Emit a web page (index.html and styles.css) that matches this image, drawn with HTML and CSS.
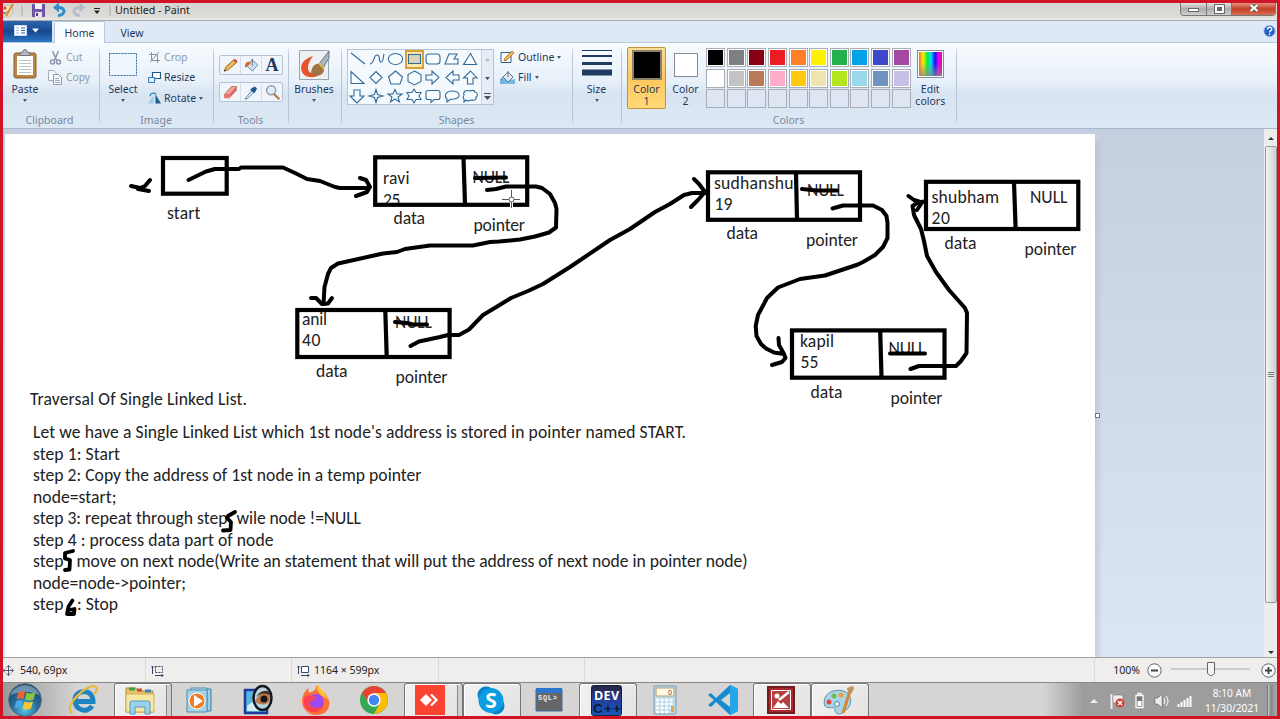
FILE: index.html
```html
<!DOCTYPE html>
<html lang="en">
<head>
<meta charset="utf-8">
<title>Untitled - Paint</title>
<link rel="stylesheet" href="styles.css">
</head>
<body>
<div class="screen">
  <header class="titlebar">
    <svg class="quick" width="112" height="18" viewBox="3 3 112 18">
      <path d="M3 5h7l3 3-1 6-4 3H3z" fill="#f4e4c4" stroke="#a5abb0" stroke-width=".6"/>
      <circle cx="5" cy="8" r="1.500" fill="#d04b35"/><circle cx="8" cy="12" r="1.500" fill="#6abb5b"/><circle cx="4.500" cy="13" r="1.300" fill="#3a8bc9"/>
      <path d="M6 16L13 4" stroke="#e28b2c" stroke-width="2.200"/>
      <path d="M22 5v11M110 5v11" stroke="#aaa"/>
      <path d="M32.500 4.500h12v12h-12z" fill="#7256a8" stroke="#67509a"/><path d="M35 4h7v5h-7z" fill="#f5f3fb"/><path d="M35 12h7v5h-7z" fill="#e6e2f2"/><path d="M36 13h2v3h-2z" fill="#553b8a"/>
      <path d="M58 15.500c8 0 8-8.500 0-8" fill="none" stroke="#318dca" stroke-width="3"/><path d="M53 7.500l6-5v10z" fill="#318dca"/>
      <path d="M80 15.500c-8 0-8-8.500 0-8" fill="none" stroke="#b1bdca" stroke-width="3"/><path d="M85.500 7.500l-6-5v10z" fill="#b1bdca"/>
      <path d="M94 8.500h6" stroke="#222"/><path d="M94 10.500h6l-3 3.500z" fill="#222"/>
    </svg>
    <span class="window-title">Untitled - Paint</span>
    <div class="window-buttons">
      <span class="wb min"><i></i></span><span class="wb max"><i></i></span><span class="wb close"><svg width="10" height="8" viewBox="0 0 10 8"><path d="M1.500 1l7 6M8.500 1l-7 6" stroke="#555" stroke-width="3.400"/><path d="M1.500 1l7 6M8.500 1l-7 6" stroke="#fff" stroke-width="2.200"/></svg></span>
    </div>
  </header>

  <nav class="tabs">
    <div class="file-tab"><svg width="30" height="14" viewBox="0 0 30 14"><path d="M.500 1.500h12v10H.500z" fill="#fff" stroke="#c8dcf6"/><path d="M2 4h3M2 6.500h3M2 9h3" stroke="#9bb8e4"/><path d="M7 4h4M7 6.500h4M7 9h4" stroke="#225fb5"/><path d="M18 4.500h7l-3.500 4z" fill="#fff"/></svg></div>
    <div class="tab active">Home</div>
    <div class="tab view">View</div>
    <svg class="help" width="13" height="14" viewBox="0 0 13 14"><circle cx="6.500" cy="7" r="5.700" fill="#2460c5" stroke="#a9c3ec"/><path d="M4.500 5.500c0-3 4.500-3 4.300-.3C8.700 6.700 6.600 6.500 6.600 8.400M6.600 9.400v1.500" fill="none" stroke="#fff" stroke-width="1.400"/></svg>
  </nav>

  <section class="ribbon">
    <div class="group clipboard">
      <div class="tools-row">
        <div class="big paste">
          <svg width="26" height="34" viewBox="0 0 26 34"><rect x="2" y="5" width="22" height="25" rx="2" fill="#b98645" stroke="#8b602c"/><path d="M5 8h16v19H5z" fill="#fff"/><path d="M7 12.500h12M7 15.500h12M7 18.500h12M7 21.500h12M7 24.500h12" stroke="#bcc3cb"/><path d="M8 4.500h2.500c0-4 5-4 5 0H18v3H8z" fill="#b3b8be" stroke="#70767c"/></svg>
          <span>Paste</span><b class="caret"></b>
        </div>
        <div class="list off">
          <div class="item"><svg width="14" height="15" viewBox="0 0 14 15"><path d="M4 1l4 9M10 1L6 10" stroke="#8b97a8" stroke-width="1.500"/><circle cx="4" cy="12" r="2" fill="none" stroke="#8b97a8" stroke-width="1.500"/><circle cx="10" cy="12" r="2" fill="none" stroke="#8b97a8" stroke-width="1.500"/></svg><span>Cut</span></div>
          <div class="item"><svg width="15" height="15" viewBox="0 0 15 15"><path d="M.500.500h5l3 3v7h-8z" fill="#f5f8fc" stroke="#a4b0c0"/><path d="M5.500 4.500h5l3 3v7h-8z" fill="#f5f8fc" stroke="#8f9db0"/><path d="M7 8.500h4M7 10.500h5M7 12.500h5" stroke="#a4b0c0"/></svg><span>Copy</span></div>
        </div>
      </div>
      <div class="label">Clipboard</div>
    </div>

    <div class="group image">
      <div class="tools-row">
        <div class="big select">
          <svg width="30" height="34" viewBox="0 0 30 34"><rect x="1.500" y="5.500" width="27" height="22" fill="#eef6fd" stroke="#2d6c9e" stroke-dasharray="2 1"/></svg>
          <span>Select</span><b class="caret"></b>
        </div>
        <div class="list">
          <div class="item off"><svg width="13" height="13" viewBox="0 0 13 13"><path d="M3.500 1v8.500H12M1 3.500h8.500V12M2 11L11 1" fill="none" stroke="#8592a6"/></svg><span>Crop</span></div>
          <div class="item"><svg width="13" height="13" viewBox="0 0 13 13"><path d="M4.500 1.500h8v6h-8z" fill="#fff" stroke="#225886" stroke-width="1.200"/><path d="M.600 6.500h6v5h-6z" fill="#e0f1fd" stroke="#2d77b2"/></svg><span>Resize</span></div>
          <div class="item"><svg width="13" height="13" viewBox="0 0 14 13"><path d="M6 3v9H0z" fill="#9ccce8"/><path d="M8 2v10h6z" fill="#176399"/><path d="M2 4c1-4 5-4 7-2" fill="none" stroke="#2d86bd" stroke-width="1.300"/></svg><span>Rotate</span><b class="caret"></b></div>
        </div>
      </div>
      <div class="label">Image</div>
    </div>

    <div class="group tools">
      <div class="tool-grid">
        <div class="tool-line">
          <svg width="21" height="20" viewBox="0 0 21 20"><path d="M4 17l2-5 9-8 3 3-9 8z" fill="#f2bb4f" stroke="#8b632a"/><path d="M15 4l3 3" stroke="#cf554a" stroke-width="3"/><path d="M4 17l1-2 1 1z" fill="#222"/></svg>
          <svg width="21" height="20" viewBox="0 0 21 20"><path d="M6 11l6-7 6 6-6 7z" fill="#cbddec" stroke="#6f8ca6"/><path d="M4 13c-1-5 2-8 7-6l-4 4z" fill="#de6630"/><path d="M12 11V3" stroke="#5a7187"/></svg>
          <span class="glyph">A</span>
        </div>
        <div class="tool-line">
          <svg width="21" height="20" viewBox="0 0 21 20"><path d="M4 13l8-9h6l-8 9z" fill="#f0a29b" stroke="#c7685f"/><path d="M4 13h6v4H4z" fill="#e4746c"/><path d="M10 13l8-9v4l-8 9z" fill="#d3665e"/></svg>
          <svg width="21" height="20" viewBox="0 0 21 20"><path d="M5 16l7-8 2 2-7 7-3 1z" fill="#d8ecf8" stroke="#57819d"/><path d="M11 6l4 4M13 8l3-3" stroke="#23588d" stroke-width="4"/></svg>
          <svg width="21" height="20" viewBox="0 0 21 20"><circle cx="9" cy="8" r="5" fill="#ddeef9" stroke="#929dab" stroke-width="1.600"/><path d="M12 12l6 6" stroke="#b37a4a" stroke-width="2.500"/></svg>
        </div>
      </div>
      <div class="label">Tools</div>
    </div>

    <div class="group brushes">
      <div class="big">
        <svg width="31" height="34" viewBox="0 0 31 34"><path d="M.500 2.500h29v29H.500z" fill="#eef0f1" stroke="#9aa4ae"/><path d="M14 8C5 11 0 16 3 24c3 6 13 7 18 2-7 1-12-1-12-6 0-4 2-8 5-12z" fill="#e6542c"/><path d="M30 3L20 16l4 4 6-10z" fill="#a7b7c5" stroke="#667687"/><path d="M12 26c0-8 5-11 9-10 5 2 5 7 2 10-3 2-7 3-11 0z" fill="#a07345"/><path d="M20 15l5 6" stroke="#d9b25b" stroke-width="2"/></svg>
        <span>Brushes</span><b class="caret"></b>
      </div>
    </div>

    <div class="group shapes">
      <div class="tools-row">
        <svg class="gallery" width="148" height="57" viewBox="347 49 148 57">
          <rect x="347.500" y="49.500" width="146" height="55" fill="#f4f9fe" stroke="#b5c3d6"/>
          <path d="M481.500 50v54" stroke="#c4cfdf"/><path d="M482 50h11v54h-11z" fill="#e5edf7"/>
          <rect x="406" y="51" width="17" height="17" fill="#ffeab3" stroke="#d9a030" stroke-width="2"/>
          <g fill="#f7fcff" stroke="#336b98" stroke-width="1.100">
            <path d="M351 53l14 11M370 64c5-1 3-9 7-9s1 7 4 7 2-6 3-8" fill="none"/><ellipse cx="395.500" cy="59" rx="7.200" ry="5.500"/><rect x="408.500" y="54.500" width="12" height="9" fill="#dcd6bd"/><rect x="426" y="54" width="14" height="10" rx="3"/><path d="M445 64l4-10h8l-3 5h4v5z"/><path d="M470.500 53.500l6 11h-13z"/>
            <path d="M351 71.500v12h13zM376 71.500l6 6-6 6-6-6zM395.500 71l7 6-2.500 7h-9l-2.500-7zM414.500 71l6.500 3.500v7l-6.500 3.500-6.500-3.500v-7zM426 75h6v-4l7 6.500-7 6.500v-4h-6zM459 75h-6v-4l-7 6.500 7 6.500v-4h6zM467.500 84v-6h-4l7-7 6.500 7h-4v6z"/>
            <path d="M354 90v6h-4l7 7 7-7h-4v-6zM376 89.500l1.500 5 5.500 1.500-5.500 1.500-1.500 5-1.500-5-5.500-1.500 5.500-1.500zM395 89.500l2 4.500h5l-4 3 1.500 5-4.500-3-4.500 3 1.500-5-4-3h5zM414 89l2 3.500h5l-2 3.500 2 3.500h-5l-2 3.500-2-3.500h-5l2-3.500-2-3.500h5zM428 90.500h10q2 0 2 2v5q0 2-2 2h-4l-3 3v-3h-3q-2 0-2-2v-5q0-2 2-2z"/><path d="M447 99c-4-4 0-8 5-8 8 0 10 7 2 8l-4 .500-3 2.500z"/><path d="M465 91c2-1 3-.500 5 0 2-1 4-1 5 1 3 1 3 4 1 5 1 3-3 4-5 3-2 1-4 1-5 0l-2 2v-3c-2-2 0-3 0-4-1-2 0-3 1-4z"/>
          </g>
          <path d="M485 61h5l-2.500-3z" fill="#b1b9c5"/><path d="M485 77h5l-2.500 3zM484 96h7l-3.500 4z" fill="#465164"/><path d="M484 93.500h7" stroke="#465164"/>
        </svg>
        <div class="list">
          <div class="item"><svg width="15" height="14" viewBox="0 0 15 14"><path d="M1 2.500h10v10H1z" fill="#f7fbff" stroke="#345f8e"/><path d="M4 11l1-3 7-7 2 2-7 7z" fill="#efb94a" stroke="#ad6833" stroke-width=".8"/></svg><span>Outline</span><b class="caret"></b></div>
          <div class="item"><svg width="15" height="15" viewBox="0 0 15 15"><path d="M0 9c5-2 8 2 15 0v5H0z" fill="#76b6de"/><path d="M3 7l5-5 5 5-5 5z" fill="#e1e9f0" stroke="#607991"/><path d="M8 7V1M3 7L1 10" stroke="#607991"/></svg><span>Fill</span><b class="caret"></b></div>
        </div>
      </div>
      <div class="label">Shapes</div>
    </div>

    <div class="group size">
      <div class="big">
        <svg width="30" height="34" viewBox="0 0 30 34"><path d="M0 2.500h30" stroke="#1f3b62"/><path d="M0 8h30" stroke="#1f3b62" stroke-width="2"/><path d="M0 15.500h30" stroke="#1f3b62" stroke-width="3"/><path d="M0 24.500h30" stroke="#1f3b62" stroke-width="6"/></svg>
        <span>Size</span><b class="caret"></b>
      </div>
    </div>

    <div class="group colors">
      <div class="color-row">
        <div class="chip-box picked"><i class="chip black"></i><span>Color<br>1</span></div>
        <div class="chip-box"><i class="chip white"></i><span>Color<br>2</span></div>
        <div class="palette">
          <i class="c1"></i><i class="c2"></i><i class="c3"></i><i class="c4"></i><i class="c5"></i><i class="c6"></i><i class="c7"></i><i class="c8"></i><i class="c9"></i><i class="c10"></i>
          <i class="c11"></i><i class="c12"></i><i class="c13"></i><i class="c14"></i><i class="c15"></i><i class="c16"></i><i class="c17"></i><i class="c18"></i><i class="c19"></i><i class="c20"></i>
          <i class="e"></i><i class="e"></i><i class="e"></i><i class="e"></i><i class="e"></i><i class="e"></i><i class="e"></i><i class="e"></i><i class="e"></i><i class="e"></i>
        </div>
        <div class="chip-box edit"><i class="chip rainbow"></i><span>Edit<br>colors</span></div>
      </div>
      <div class="label">Colors</div>
    </div>
  </section>

  <main class="workspace">
    <svg class="canvas" width="1090" height="523" viewBox="5 134 1090 523">
      <g class="note">
        <text x="167" y="218.700" textLength="33.500">start</text>
        <text x="383" y="184" textLength="26.500">ravi</text><text x="383" y="205.500" textLength="17.500">25</text>
        <text x="472.500" y="182.500" textLength="37">NULL</text>
        <text x="393.500" y="224.400" textLength="31.500">data</text><text x="473.500" y="230.700" textLength="51.500">pointer</text>
        <text x="302" y="325" textLength="25">anil</text><text x="302" y="346.300" textLength="18.500">40</text>
        <text x="395" y="327.700" textLength="37">NULL</text>
        <text x="316" y="377" textLength="31.500">data</text><text x="395.500" y="383.400" textLength="52">pointer</text>
        <text x="714" y="189" textLength="79.500">sudhanshu</text><text x="714.500" y="210.400" textLength="18">19</text>
        <text x="807" y="196.400" textLength="37">NULL</text>
        <text x="726.500" y="239.400" textLength="31.500">data</text><text x="806" y="246" textLength="52">pointer</text>
        <text x="800" y="346.500" textLength="34">kapil</text><text x="800.500" y="368" textLength="18">55</text>
        <text x="888.500" y="353.700" textLength="37">NULL</text>
        <text x="810.500" y="397.700" textLength="32">data</text><text x="890.500" y="404" textLength="52">pointer</text>
        <text x="931.500" y="203" textLength="67.500">shubham</text><text x="931.500" y="224.400" textLength="18.500">20</text>
        <text x="1030" y="203" textLength="37.500">NULL</text>
        <text x="944.500" y="248.700" textLength="32">data</text><text x="1024.500" y="255.400" textLength="52">pointer</text>
        <text x="30" y="405" textLength="217">Traversal Of Single Linked List.</text>
        <text x="33" y="438" textLength="653">Let we have a Single Linked List which 1st node's address is stored in pointer named START.</text>
        <text x="33" y="459.500" textLength="87">step 1: Start</text>
        <text x="33" y="481" textLength="388.500">step 2: Copy the address of 1st node in a temp pointer</text>
        <text x="33" y="502.500" textLength="83.500">node=start;</text>
        <text x="33" y="524" textLength="194.500">step 3: repeat through step</text><text x="236.500" y="524" textLength="124.500">wile node !=NULL</text>
        <text x="33" y="545.500" textLength="240.500">step 4 : process data part of node</text>
        <text x="33" y="567" textLength="30.500">step</text><text x="76.500" y="567" textLength="671">move on next node(Write an statement that will put the address of next node in pointer node)</text>
        <text x="33" y="588.700" textLength="153">node=node-&gt;pointer;</text>
        <text x="33" y="610" textLength="30.500">step</text><text x="77" y="610" textLength="41">: Stop</text>
      </g>
      <g class="box">
        <rect x="163" y="158" width="63.700" height="35.700"/>
        <rect x="375.200" y="157.300" width="152" height="47.500"/><path d="M463.500 158L465 204"/>
        <rect x="297.300" y="310" width="152.300" height="47"/><path d="M385.300 311l1.400 45"/>
        <rect x="708" y="172.300" width="152" height="47.500"/><path d="M796 173l1 46"/>
        <rect x="792" y="330.400" width="152.500" height="47.300"/><path d="M880.200 331l1.300 46"/>
        <rect x="926" y="181.800" width="152.300" height="47.200"/><path d="M1014 182l1.600 46"/>
      </g>
      <g class="ink">
        <path d="M131 186L140 188L145 186L150 180M138 189L149 191M188.500 180L206 171.500L215 169L239 169L241 167.500L283 167.500L295 173L307 179L320 181L335 187L340 188L369 188M360 178L366 180L370 187L367 192L356 196"/>
        <path d="M475 178L506 177.500M487 190L496 189L506 186.500L536 186.500L542 188L550 194L555 203L556.500 209L556 227.500L549 232.500L535 236.500L520 239.500L499 241.500L490 242L473 245.500L430 245.500L405 249L397 252L383 253.500L338 263.500L331 268L328 274L324.500 287L323.500 304"/>
        <path d="M311 298L316 298L322 304L328 303.500L332 298"/>
        <path d="M395 322L407 323L413 324.500L427 324.500M410.500 346L419 341.500L440 337L448 335L459 335L469 329.500L483 315L498 306L511 298L528 291L543 284L570 267L610 240L630 229L655 212L670 204L684 195L692 193L705 193"/>
        <path d="M694 179L699 184L705 192L698 200L691 207"/>
        <path d="M802 189L817 190.500L837 190.500M832.500 208.500L843 205.500L873 205.500L882 210L886.500 216L887.500 223L887.500 238L883 247L875 255L863 262L858 264.500L825 275.500L800 279L778 287.500L767 298L758 315L755.700 326L756.500 336L761 344L766 348.500L774 352.500L784 354M778.500 338L779 345L784 354L785.500 358L782 362L772 365"/>
        <path d="M890 353.500L925 353.500M910.500 369L919 366L956 366L961 361L966.500 353L967 313L965 308L949 290L936 272L927 256L924 241L921 229L914 215L912.500 206L917 203L924 201.500M908.500 196L914 200L922 202.500L917 210"/>
        <path class="digit" d="M235 512L228 516L227 518L231 522L230.500 530L223 530.500M73 551L65 553L65 558.500L70 560L69.500 569.500L65 570M72.500 600.500L68.500 606.500L67 614L74 614L74.500 609L69 610"/>
      </g>
      <path class="aim-halo" d="M502 199.500h18M511.500 190v18"/><g class="aim"><path d="M502 199.500h18M511.500 190v18"/><circle cx="511.500" cy="199.500" r="2.500"/></g>
    </svg>
    <div class="desk"><i class="handle"></i></div>
    <div class="scroll"><i class="up"></i><div class="thumb"><b></b></div><i class="down"></i></div>
  </main>

  <footer class="status">
    <div class="cell pos"><svg width="11" height="13" viewBox="0 0 11 13"><path d="M0 6.500h10M5.500 1.500v10M3.500 3.500l2-2 2 2M3.500 9.500l2 2 2-2M2 4.500l-2 2 2 2M8.500 4.500l2 2-2 2" fill="none" stroke="#3e4b62" stroke-width=".9"/></svg><span>540, 69px</span></div>
    <div class="cell sel"><svg width="13" height="13" viewBox="0 0 13 13"><path d="M4.500 2.500h7v6h-7z" fill="none" stroke="#334664" stroke-dasharray="2 1"/><path d="M1.500 10V2M0 3.500L1.500 2 3 3.500M4 11.500h8M10.500 10l1.500 1.500-1.500 1.500" fill="none" stroke="#334664"/></svg></div>
    <div class="cell dim"><svg width="13" height="13" viewBox="0 0 13 13"><path d="M4.500 2.500h7v6h-7z" fill="#fff" stroke="#334664"/><path d="M1.500 10V2M0 3.500L1.500 2 3 3.500M4 11.500h8M10.500 10l1.500 1.500-1.500 1.500" fill="none" stroke="#334664"/></svg><span>1164 × 599px</span></div>
    <div class="cell gap"></div>
    <div class="cell rest"></div>
    <div class="zoom"><span>100%</span><svg width="131" height="20" viewBox="1146 660 131 20"><g fill="#fafafa" stroke="#666"><circle cx="1154.500" cy="670.500" r="6.700"/><circle cx="1268.500" cy="670.500" r="6.700"/></g><path d="M1151 670.500h7M1265 670.500h7M1268.500 667v7" stroke="#444" stroke-width="1.800"/><path d="M1171 669h79" stroke="#aaa"/><path d="M1207.500 662.500h7v11l-3.500 2.500-3.500-2.500z" fill="#f4f4f4" stroke="#666"/></svg></div>
  </footer>

  <footer class="taskbar">
    <div class="slot orb"><svg width="36" height="34" viewBox="7 683.500 36 34"><defs><radialGradient id="orb" cx=".5" cy=".8" r=".8"><stop offset="0" stop-color="#58c6e8"/><stop offset=".5" stop-color="#256a9b"/><stop offset="1" stop-color="#1c405f"/></radialGradient></defs><circle cx="25" cy="700.500" r="16.300" fill="url(#orb)" stroke="#47677f"/><path d="M10 696a16 16 0 0130 0c-10-5-20-5-30 0z" fill="#b9d5e5" opacity=".5"/><path d="M18 693q4-2 7-.500l-1.500 7q-3-1.500-7 .500z" fill="#ee6233"/><path d="M26.500 693q4 2 9 0l-2 7q-4 2-8.500 0z" fill="#8ac540"/><path d="M16 702q4-2 7-.500l-1.500 7q-3-1.500-7 .500z" fill="#48a8e4"/><path d="M24.500 702q4 2 8.500 0l-2 7q-4 2-8.500 0z" fill="#fac832"/></svg></div>
    <div class="slot ie"><svg width="32" height="32" viewBox="0 0 32 32"><path d="M25 22c-5 8-17 4-17-6C8 5 26 4 26 17.500H9" fill="none" stroke="#1e83c2" stroke-width="5"/><path d="M5 29C-5 22 23-3 29 3c2 2 0 5-2 7" fill="none" stroke="#e7b93c" stroke-width="2.300"/></svg></div>
    <div class="slot open stack explorer"><svg width="32" height="32" viewBox="0 0 32 32"><path d="M2 4h10l2 3h15v21H2z" fill="#e5c365" stroke="#b78c35"/><path d="M5 5h6" stroke="#3da152" stroke-width="3"/><path d="M13 6h5" stroke="#d44a3a" stroke-width="3"/><path d="M21 7h6" stroke="#3c83c5" stroke-width="3"/><path d="M2 10h28v18H2z" fill="#f8e7a4" stroke="#d3ad59"/><path d="M6 30V19q0-2 2-2h16q2 0 2 2v11h-5v-7H11v7z" fill="#9bd2eb" stroke="#5198c1"/></svg></div>
    <div class="slot"><svg width="30" height="30" viewBox="0 0 30 30"><path d="M10 4h16v22H10z" fill="#9bd0e6" stroke="#477d9e"/><path d="M6 3h16v22H6z" fill="#b9e0ee" stroke="#4e8eae"/><path d="M2 5h20v22H2z" fill="#a5d4e8" stroke="#4e8eae"/><circle cx="12" cy="16" r="8" fill="#f17d22" stroke="#fff"/><path d="M9 10l9 6-9 6z" fill="#fff"/></svg></div>
    <div class="slot"><svg width="32" height="32" viewBox="0 0 32 32"><path d="M3 6h22v23H3z" fill="#58b6dc" stroke="#1c3ba0" stroke-width="2.500"/><path d="M5 22l8-6 10 11H5z" fill="#d4edf5"/><ellipse cx="20.500" cy="14" rx="9" ry="12" fill="#b6d7df" stroke="#141820" stroke-width="2.500"/><path d="M13 18q5-13 15-8v6q-4 8-15 2z" fill="#bb7952"/><path d="M14 13q6-6 14-2v-3q-8-4-14 5z" fill="#473224"/><circle cx="22" cy="15" r="3.500" fill="#191513"/></svg></div>
    <div class="slot"><svg width="30" height="30" viewBox="0 0 30 30"><path d="M3 8l4-5 1 5 6-3 2-5 4 5 4 3 4 7c2 9-4 15-13 15S0 22 1 14z" fill="#ff7139"/><path d="M17 0l7 9 4 7c-1-3-6-4-8-6-3-3-5-6-3-10z" fill="#ffc72b"/><circle cx="15" cy="17" r="8" fill="#9d4af1"/><path d="M3 12c5-4 8 0 12 0-1 5-6 2-6 7 0 4 9 5 13 2-3 9-16 8-19-1z" fill="#ff4251"/></svg></div>
    <div class="slot"><svg width="30" height="30" viewBox="0 0 30 30"><circle cx="15" cy="15" r="14" fill="#35a853"/><path d="M2.900 8A14 14 0 0127.100 8L15 8v7H8z" fill="#ea4335"/><path d="M27.100 8A14 14 0 0115 29l6-11-6-10z" fill="#fbbc05"/><circle cx="15" cy="15" r="6.700" fill="#fff"/><circle cx="15" cy="15" r="5.200" fill="#4285f4"/></svg></div>
    <div class="slot open stack any"><svg width="30" height="30" viewBox="0 0 30 30"><path d="M0 0h30v30H0z" fill="#fb4332"/><path d="M5 15l6-6 6 6-6 6z" fill="#fff"/><path d="M16 9.500l5.500 5.500-5.500 5.500" fill="none" stroke="#fff" stroke-width="2.200"/></svg></div>
    <div class="slot open"><svg width="28" height="29" viewBox="0 0 28 29"><circle cx="9" cy="9" r="8.500" fill="#0782c6"/><circle cx="19" cy="20" r="8.500" fill="#0782c6"/><circle cx="14" cy="14.500" r="12.500" fill="#0c9cdf"/><text x="14" y="22" class="skype">S</text></svg></div>
    <div class="slot"><svg width="28" height="26" viewBox="0 0 28 26"><path d="M1 2h26v22H1z" fill="#666" stroke="#3c6ba6"/><path d="M1 1h26v5H1z" fill="#2b75cd"/><text x="3" y="13" class="sql" textLength="19">SQL&gt;</text></svg></div>
    <div class="slot open"><svg width="31" height="31" viewBox="0 0 31 31"><defs><linearGradient id="dev" x2="0" y2="1"><stop stop-color="#28233f"/><stop offset=".5" stop-color="#243f9c"/><stop offset="1" stop-color="#1559bb"/></linearGradient></defs><rect x=".5" y=".5" width="30" height="30" rx="2" fill="url(#dev)" stroke="#17223e"/><text x="3" y="14.500" class="dev" textLength="25">DEV</text><text x="2" y="28" class="cpp" textLength="28">C++</text></svg></div>
    <div class="slot"><svg width="24" height="30" viewBox="0 0 24 30"><rect x="1" y="1" width="22" height="28" rx="1" fill="#c0dcec" stroke="#729bb5"/><path d="M3 3h18v8H3z" fill="#fff9e6" stroke="#b4a06e"/><text x="15" y="10" class="zero">0</text><g stroke="#fff" stroke-width="2.500" stroke-dasharray="3 1.500"><path d="M3 15h18M3 19h18M3 23h18M3 27h14"/></g><path d="M18 21h3v6h-3z" fill="#e6a543"/></svg></div>
    <div class="slot"><svg width="32" height="30" viewBox="0 0 32 30"><path d="M23 0l8 4v22l-8 4L9 17l-5 5-3-2 6-5-6-5 3-2 5 5zM23 8l-9 7 9 7z" fill="#168bd2" fill-rule="evenodd"/><path d="M23 0l8 4v22l-8 4z" fill="#24a5e9"/></svg></div>
    <div class="slot open"><svg width="28" height="28" viewBox="0 0 28 28"><path d="M1 1h26v26H1z" fill="#a82a2d" stroke="#711d20" stroke-width="2"/><path d="M4.500 4.500h19v19h-19z" fill="#b6403f" stroke="#fff"/><path d="M6 22l5-7 3 3 2-2 6 6z" fill="#fff"/><path d="M12 14L22 6" stroke="#fff" stroke-width="2.500"/><circle cx="10" cy="10" r="2.500" fill="#fff"/></svg></div>
    <div class="slot open"><svg width="32" height="30" viewBox="0 0 32 30"><path d="M2 21C-2 10 10 3 20 6c11 3 9 15 2 20-5 5-10 3-10-1 0-5-6 0-10-4z" fill="#a9d5e8" stroke="#628ca2"/><circle cx="6" cy="17" r="2.500" fill="#df4b3e"/><circle cx="11" cy="11" r="2.500" fill="#77ba47"/><circle cx="18" cy="10" r="2.500" fill="#eda334"/><circle cx="14" cy="19" r="2.500" fill="#e9f6fc" stroke="#4b8bac"/><path d="M20 28L27 6" stroke="#d98538" stroke-width="3"/><path d="M25 8l-1-5 6-2 1 3-3 5z" fill="#bd955d"/></svg></div>
    <div class="tray">
      <svg width="108" height="24" viewBox="1088 690 108 24"><path d="M1091 704h8l-4-4z" fill="#eee"/><path d="M1112.500 695v15" stroke="#eee" stroke-width="2"/><path d="M1114 696h8l2 1v7h-10z" fill="#ededed" stroke="#666" stroke-width=".5"/><circle cx="1121" cy="704" r="4.500" fill="#d64036"/><path d="M1119 702l4 4M1123 702l-4 4" stroke="#fff" stroke-width="1.400"/><path d="M1137 696.500h7v12h-7zM1139 694.500h3v2h-3z" fill="#777" stroke="#fff" stroke-width="1.300"/><path d="M1138.500 702h4v5h-4z" fill="#fff"/><path d="M1156 699h3l4-4v14l-4-4h-3z" fill="#eee" stroke="#555" stroke-width=".5"/><path d="M1165 699q2 3 0 6M1167 697q4 5 0 10" fill="none" stroke="#fff"/><path d="M1179.500 708v-3M1182.500 708v-5M1185.500 708v-7M1188.500 708v-9M1191.500 708v-11" stroke="#fff" stroke-width="2"/></svg>
      <div class="clock"><span>8:10 AM</span><span>11/30/2021</span></div>
      <div class="peek"></div>
    </div>
  </footer>
</div>
</body>
</html>
```

FILE: styles.css
```css
* { box-sizing: border-box; }
body { margin: 0; overflow: hidden; font: 10.5px/13px "Noto Sans", "Open Sans", sans-serif; color: #1e395b; }
svg { display: block; flex: none; }
i, b { display: block; }
.screen { width: 1280px; height: 719px; border: 3px solid #d01426; display: flex; flex-direction: column; background: #dce6f4; }

.titlebar { height: 18px; display: flex; background: linear-gradient(#d6d5d2, #dedcd8 80%, #eceae7); border-bottom: 1px solid #a9adb2; }
.window-title { color: #222; line-height: 14px; font-size: 10.7px; }
.window-buttons { display: flex; margin-left: auto; height: 13px; margin-right: 1px; border: 1px solid #777; border-top: 0; border-radius: 0 0 4px 4px; overflow: hidden; }
.wb { display: flex; justify-content: center; align-items: center; background: linear-gradient(#e4e4e4, #aaabad 50%, #d0d0d0); border-right: 1px solid #777; }
.min { width: 26px; }
.min i { width: 11px; height: 4px; background: #fff; border: 1px solid #666; margin-top: 2px; }
.max { width: 25px; }
.max i { width: 9px; height: 8px; border: 2px solid #fff; outline: 1px solid #666; background: #666; }
.close { width: 43px; border: 0; background: linear-gradient(#e39282, #c53e25 50%, #d87154); padding-bottom: 2px; }

.tabs { height: 22px; display: flex; background: #dfe9f5; border-bottom: 1px solid #b7c9de; }
.file-tab { width: 49px; height: 21px; background: linear-gradient(#2c65ad, #17488f 50%, #2b75c4); padding: 3px 0 0 11px; }
.tab { width: 51px; margin-left: 2px; text-align: center; line-height: 22px; }
.tab.active { height: 22px; background: #fafdff; border: 1px solid #b7c9de; border-bottom: 0; border-radius: 2px 2px 0 0; line-height: 22px; }
.tab.view { width: 50px; margin-left: 2px; line-height: 24px; }
.help { margin: 3px 1px 0 auto; }

.ribbon { height: 86px; display: flex; background: linear-gradient(#f7fbfe 0, #e7f0f9 45%, #d9e4f2 60%, #dde8f5 100%); border-bottom: 1px solid #a9b9cf; }
.group { display: flex; flex-direction: column; border-right: 1px solid transparent; border-image: linear-gradient(transparent 5%, #b9c6d8 15%, #b9c6d8 90%, transparent 95%) 1; flex: none; }
.label { margin-top: auto; height: 14px; line-height: 12px; text-align: center; color: #7a889d; padding-right: 1px; }
.tools-row { display: flex; }
.big { display: flex; flex-direction: column; align-items: center; padding-top: 5px; }
.big svg { height: 34px; margin-bottom: 1px; }
.big .caret { margin-top: 3px; }
.caret { width: 0; height: 0; border: 2.5px solid transparent; border-top: 3px solid #4c5b72; border-bottom: 0; }
.list { padding-top: 4px; }
.item { display: flex; align-items: center; height: 20.5px; gap: 4px; white-space: nowrap; }
.off { color: #8d99aa; }
.clipboard { width: 97px; }
.clipboard .label { padding-right: 3px; }
.paste { width: 44px; }
.clipboard .list { width: 50px; padding-left: 1px; font-size: 10.3px; }
.clipboard .item { gap: 3px; }
.clipboard .item svg { width: 15px; }
.image { width: 114px; }
.select { width: 46px; }
.image .list { padding-left: 2px; }
.image .item { gap: 3px; }
.tools { width: 75px; }
.tool-grid { padding: 12px 0 0 5px; display: grid; gap: 7px; }
.tool-line { display: flex; width: 64px; height: 20px; border: 1px solid #b4c2d5; border-radius: 2px; background: #f0f5fb; overflow: hidden; }
.tool-line > * { height: 18px; width: 21px; border-right: 1px solid #d6deea; }
.tool-line > :last-child { border: 0; }
.glyph { text-align: center; font: bold 18px/19px "Liberation Serif", serif; }
.brushes { width: 53px; }
.brushes .big { padding-right: 2px; font-size: 10.3px; }
.shapes { width: 231px; }
.gallery { margin: 6px 0 0 5px; }
.shapes .list { padding-left: 5px; }
.shapes .item { gap: 3px; }
.size { width: 49px; }
.size .big { padding-right: 1px; }

.colors { width: 335px; }
.color-row { display: flex; padding-top: 4px; height: 66px; }
.chip-box { width: 39px; height: 62px; display: flex; flex-direction: column; align-items: center; text-align: center; line-height: 12px; }
.picked { margin-left: 5px; border: 1px solid #c29138; border-radius: 2px; background: linear-gradient(#fbdc99, #fdc75c 50%, #ffda78); }
.chip { width: 24px; height: 24px; margin: 6px 0; border: 1px solid #858c95; box-shadow: inset 0 0 0 1px #fff; }
.chip.black { width: 30px; height: 30px; margin: 2px 0 3px; background: #000; border: 2px solid #8a8168; box-shadow: none; }
.chip.white { background: #fff; }
.palette { display: grid; grid-template-columns: repeat(10, 19px); grid-template-rows: repeat(3, 19px); gap: 1.65px; margin: 1px 0 0 1px; }
.palette i { border: 1px solid #a8adb6; box-shadow: inset 0 0 0 1px #fff; }
.palette .e { box-shadow: none; background: #dde6f2; }
.edit { margin-left: 0; }
.edit .chip { width: 27px; height: 28px; margin: 3px 0 5px; }
.rainbow { background: linear-gradient(transparent 45%, #888c), linear-gradient(90deg, #f44, #fe0 20%, #0e4 38%, #0df 52%, #11e 68%, #d0f 82%, #f04); }
.c1 { background: #000; } .c2 { background: #7f7f7f; } .c3 { background: #880015; } .c4 { background: #ed1c24; } .c5 { background: #ff7f27; }
.c6 { background: #fff200; } .c7 { background: #22b14c; } .c8 { background: #00a2e8; } .c9 { background: #3f48cc; } .c10 { background: #a349a4; }
.c11 { background: #fff; } .c12 { background: #c3c3c3; } .c13 { background: #b97a57; } .c14 { background: #ffaec9; } .c15 { background: #ffc90e; }
.c16 { background: #efe4b0; } .c17 { background: #b5e61d; } .c18 { background: #99d9ea; } .c19 { background: #7092be; } .c20 { background: #c8bfe7; }

.workspace { height: 528px; display: flex; padding: 5px 0 0 2px; background: linear-gradient(#c6cfdf, #dbe5f3); }
.canvas { background: #fff; font: 17.6px Carlito, Calibri, Lato, sans-serif; }
.note { fill: #222; }
.box { fill: none; stroke: #000; stroke-width: 4.2; }
.ink { fill: none; stroke: #000; stroke-width: 4; stroke-linecap: round; stroke-linejoin: round; }
.digit { stroke-width: 3.8; }
.aim { fill: #fff; stroke: #555; }
.aim-halo { stroke: #fff; stroke-width: 3; }
.desk { flex: 1; margin-top: 8px; background: linear-gradient(90deg, #aebbd080, transparent) no-repeat 0 0 / 8px 100%; }
.handle { width: 5px; height: 5px; background: #fff; border: 1px solid #777; margin-top: 271px; }
.scroll { width: 13px; margin-top: -5px; display: flex; flex-direction: column; background: #eeedee; padding: 8px 0 3px 1px; }
.up, .down { align-self: center; border: 3px solid transparent; }
.up { border-top: 0; border-bottom: 3px solid #333; margin-bottom: 6px; }
.down { border-bottom: 0; border-top: 3px solid #333; margin-top: auto; }
.thumb { height: 457px; border: 1px solid #999; border-radius: 2px; background: linear-gradient(90deg, #f5f5f5, #cfcfd1); display: flex; align-items: center; justify-content: center; }
.thumb b { width: 6px; height: 6px; background: repeating-linear-gradient(#777 0 1px, #eee 1px 2px); }

.status { height: 25px; display: flex; background: #f0eded; border-top: 1px solid #a2a2a2; color: #222; }
.cell { display: flex; align-items: center; gap: 6px; border-right: 1px solid #dbd8d8; }
.pos { width: 143px; gap: 6px; }
.sel { width: 146px; padding-left: 5px; }
.dim { width: 147px; padding-left: 5px; gap: 4px; }
.gap { width: 146px; }
.rest { width: 510px; }
.zoom { display: flex; align-items: center; margin-left: auto; gap: 6px; }

.taskbar { height: 34px; display: flex; background: linear-gradient(90deg, #999 0, #bbb 45px, #d6d5d3 75px, #d6d5d3 1040px, #9d9d9d 1080px); border-top: 1px solid #888; }
.slot { width: 58.1px; flex: none; display: flex; justify-content: center; align-items: center; padding-right: 2px; }
.orb { width: 44px; padding: 0; }
.ie { width: 67px; padding: 0 0 0 5px; }
.open { border: 1px solid #777; border-bottom: 0; border-radius: 3px 3px 0 0; background: linear-gradient(120deg, #f2f2f2, #e4e3e2); box-shadow: inset 1px 1px #fff; }
.stack { box-shadow: inset 1px 1px #fff, inset -4px 0 #d0cfce, inset -5px 0 #888; padding-right: 7px; }
.skype { font: bold 21px "Open Sans", sans-serif; fill: #fff; text-anchor: middle; }
.sql { font: bold 7px "Liberation Mono", monospace; fill: #eee; }
.dev { font: bold 12.5px/1 "Open Sans", sans-serif; fill: #fff; }
.cpp { font: bold 13.5px/1 "Liberation Sans", sans-serif; fill: #0e1834; }
.zero { font: 7px "Liberation Sans", sans-serif; fill: #444; }
.tray { margin-left: auto; display: flex; align-items: center; color: #fff; padding-top: 2px; }
.clock { width: 72px; padding: 1px 0 0 2px; display: flex; flex-direction: column; align-items: center; line-height: 15.5px; font-size: 10.2px; white-space: nowrap; }
.peek { width: 10px; height: 31px; background: linear-gradient(90deg, #ccc, #888 30%, #aaa); border-left: 1px solid #777; }
```
